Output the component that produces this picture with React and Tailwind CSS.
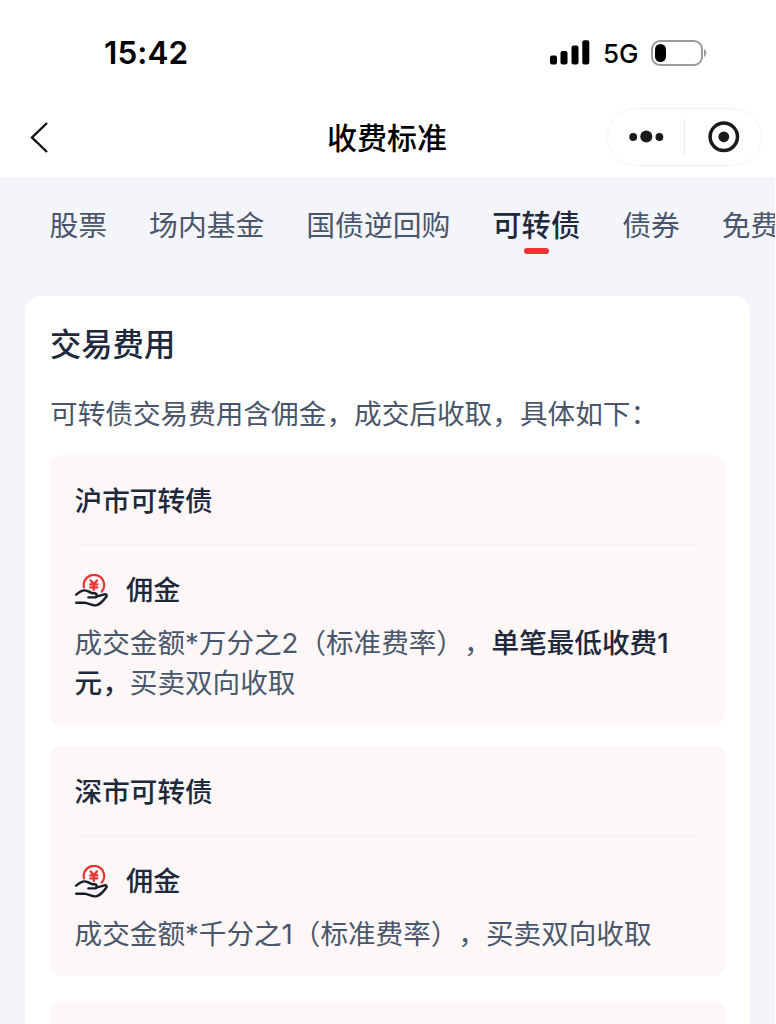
const tabs = ['股票', '场内基金', '国债逆回购', '可转债', '债券', '免费'];
const activeTab = '可转债';

function StatusBar() {
  return (
    <div className="h-[98px] pt-[7px] pl-[104px] pr-[68px] flex items-center justify-between text-black">
      <span className="pt-px font-['Inter'] font-semibold text-[31.5px] leading-none tracking-[0.1px]">15:42</span>
      <div className="flex items-center">
        <svg width="40" height="26" viewBox="0 0 40 26">
          <rect x="0" y="15.5" width="7" height="9" rx="2" />
          <rect x="10.5" y="11" width="7" height="13.5" rx="2" />
          <rect x="21.5" y="5.5" width="7" height="19" rx="2" />
          <rect x="32.3" y="0.2" width="7" height="24.3" rx="2" />
        </svg>
        <span className="ml-[13px] pt-0.5 w-[36px] font-['Inter'] font-medium text-[26px] leading-none">5G</span>
        <svg className="ml-[12px]" width="57" height="26" viewBox="0 0 57 26">
          <rect x="1" y="1" width="50" height="24" rx="8" fill="none" stroke="#9b9b9b" strokeWidth="2" />
          <rect x="4" y="4" width="11" height="18" rx="5.5" />
          <path d="M53 9v8c3-1.5 3-6.5 0-8z" fill="#9b9b9b" />
        </svg>
      </div>
    </div>
  );
}

function NavBar() {
  return (
    <div className="h-[79px] pl-[30px] pr-[14px] flex items-start">
      <div className="w-[297px] pt-[23px]">
        <svg width="20" height="34" viewBox="0 0 20 34" fill="none" stroke="#111" strokeWidth="2.4">
          <path d="M17 2L2 16.5L17 31" />
        </svg>
      </div>
      <h1 className="pt-[20px] font-medium text-[30px] leading-[40px] text-black">收费标准</h1>
      <div className="ml-auto mt-[10px] w-[155px] h-[58px] rounded-full border border-[#f3f3f3] flex items-center">
        <svg className="ml-[21px]" width="36" height="14" viewBox="0 0 36 14" fill="#1a1a1a">
          <circle cx="4.2" cy="7" r="3.9" />
          <circle cx="17.3" cy="6.5" r="6" />
          <circle cx="30.4" cy="7" r="3.9" />
        </svg>
        <span className="ml-[19px] w-px h-9 bg-[#ececec]" />
        <svg className="ml-[23px]" width="32" height="32" viewBox="0 0 32 32">
          <circle cx="15.8" cy="15.8" r="13.7" fill="none" stroke="#1a1a1a" strokeWidth="3.5" />
          <circle cx="15.8" cy="15.8" r="5.4" fill="#1a1a1a" />
        </svg>
      </div>
    </div>
  );
}

function Tabs() {
  return (
    <div className="h-[119px] pt-[29px] pl-[49.5px] flex gap-[42px] overflow-hidden whitespace-nowrap text-[28.8px] leading-[40px]">
      {tabs.map((tab) => (
        <div key={tab} className="shrink-0 flex flex-col items-center">
          {tab === activeTab ? (
            <>
              <span className="font-medium text-[29.3px] text-[#20283b]">{tab}</span>
              <span className="ml-px mt-[2px] w-[25px] h-[6px] rounded-full bg-[#e93434]" />
            </>
          ) : (
            <span className="text-[#4a566b]">{tab}</span>
          )}
        </div>
      ))}
    </div>
  );
}

// coin above an open palm
function CommissionIcon() {
  return (
    <svg width="34" height="34" viewBox="0 0 34 34" fill="none" strokeLinecap="round" strokeLinejoin="round">
      <path d="M9 13.4A10.2 10.2 0 1 1 26.8 17.6" stroke="#e93434" strokeWidth="2.2" />
      <path d="M15.6 6.4l3.2 3.6l3.2-3.6M15.3 10.4h7M15.3 13.4h7M18.8 10v6" stroke="#e93434" strokeWidth="2.3" />
      <path
        d="M1.2 20.6C4.5 17.8 6.8 16.2 10 16.4c3.4.2 4.8 2.4 7.6 2.8h2.2c2.4.4 2.4 4 0 4.2h-6.4M21.4 22.6l8-2.2c2-.4 2.8 1 1.8 2.4-2.6 3.6-5.4 7.4-9.6 8.4-4.6.9-7.6-2.2-12.2-2.4H1.2"
        stroke="#171c28"
        strokeWidth="2.4"
      />
    </svg>
  );
}

function FeeCard({ title, className, children }) {
  return (
    <section className={`rounded-[11px] bg-[#fdf7f7] pl-[24.6px] pr-[25px] ${className}`}>
      <h3 className="pt-[26px] font-medium text-[27.6px] leading-[40px] text-[#20283b]">{title}</h3>
      <div className="mt-[23px] h-px bg-[#f4f1f2]" />
      <div className="mt-[26px] flex items-center">
        <CommissionIcon />
        <span className="ml-[17.4px] font-medium text-[27.2px] leading-[40px] text-[#20283b]">佣金</span>
      </div>
      <p className="mt-[12px] text-[27.6px] leading-[40px] text-[#4a566b] whitespace-nowrap">{children}</p>
    </section>
  );
}

export default function App() {
  return (
    <div className="w-[776px] h-[1024px] overflow-hidden bg-white font-['Inter','Noto_Sans_CJK_SC',sans-serif] [text-spacing-trim:space-all]">
      <StatusBar />
      <NavBar />
      <main className="w-[775px] h-[847px] bg-[#f4f5fa] overflow-hidden">
        <Tabs />
        <div className="mx-[25px] px-[25px] pt-[29px] h-[800px] rounded-t-[16px] bg-white">
          <h2 className="font-medium text-[31.3px] leading-[40px] text-[#20283b]">交易费用</h2>
          <p className="mt-[29px] text-[27.65px] leading-[40px] text-[#4a566b] whitespace-nowrap">
            {'可转债交易费用含佣金\uff0c成交后收取\uff0c具体如下\uff1a'}
          </p>
          <FeeCard title="沪市可转债" className="mt-[21px] h-[270px]">
            {'成交金额*万分之2\uff08标准费率\uff09\uff0c'}
            <b className="font-medium text-[#20283b]">单笔最低收费1<br />{'元\uff0c'}</b>
            买卖双向收取
          </FeeCard>
          <FeeCard title="深市可转债" className="mt-[21px] h-[230px]">
            {'成交金额*千分之1\uff08标准费率\uff09\uff0c买卖双向收取'}
          </FeeCard>
          <div className="mt-[25px] h-[60px] rounded-[11px] bg-[#fdf7f7]" />
        </div>
      </main>
    </div>
  );
}
